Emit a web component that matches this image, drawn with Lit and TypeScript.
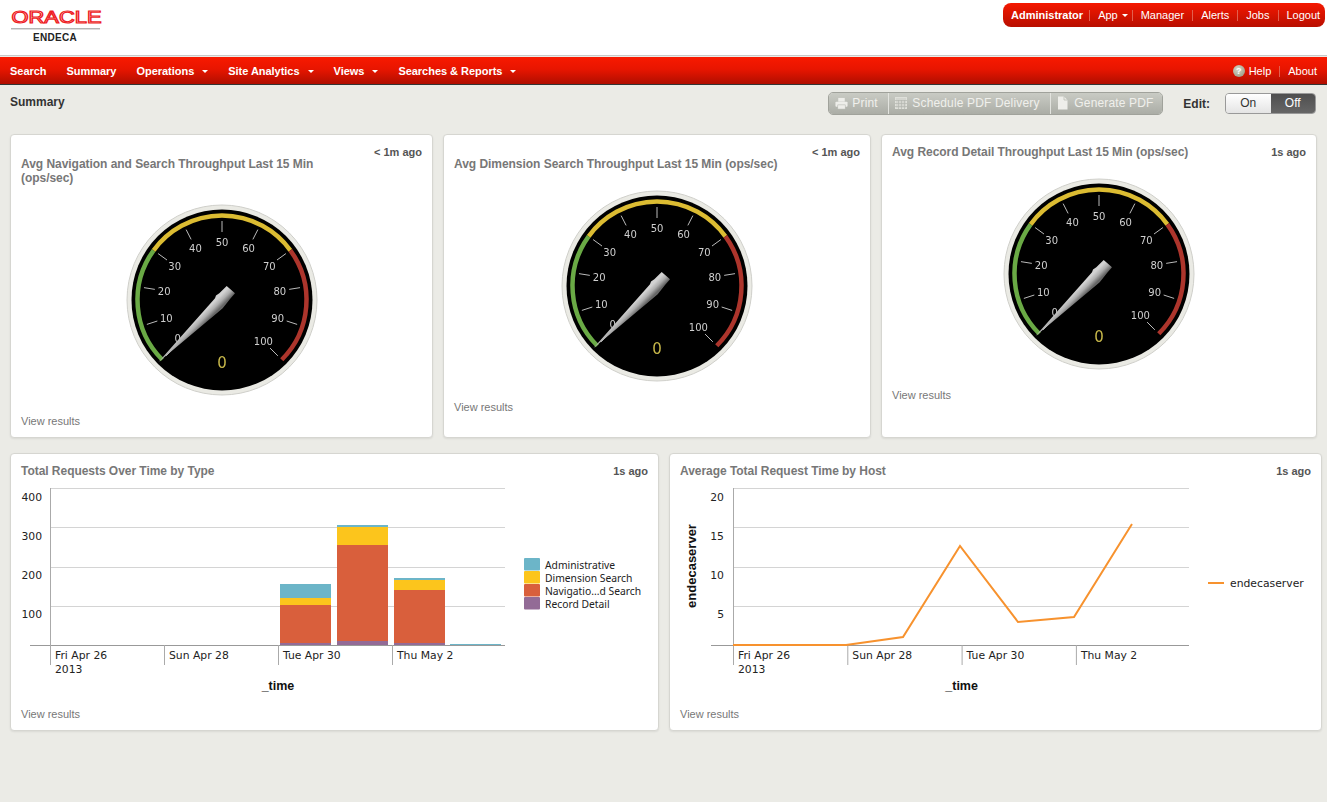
import { LitElement, html, svg, css } from 'lit';
import { customElement, property } from 'lit/decorators.js';

const polar = (r: number, value: number) => {
  const a = ((value / 100) * 270 - 225) * (Math.PI / 180);
  return [r * Math.cos(a), r * Math.sin(a)];
};

const arc = (r: number, from: number, to: number) => {
  const [x1, y1] = polar(r, from);
  const [x2, y2] = polar(r, to);
  return `M${x1} ${y1}A${r} ${r} 0 ${to - from > 66 ? 1 : 0} 1 ${x2} ${y2}`;
};

@customElement('gauge-dial')
export class GaugeDial extends LitElement {
  @property() gid = 'g';

  static styles = css`
    :host {
      display: block;
      width: 192px;
      height: 192px;
      margin: 19px auto 0;
    }
    svg {
      /* own layer, so the dial labels don't pick up coloured LCD fringes */
      will-change: transform;
    }
    text {
      font-family: 'DejaVu Sans', sans-serif;
    }
    .tick-label {
      font-size: 10px;
      fill: #cfcfcf;
    }
    .value {
      font-size: 15px;
      fill: #c8b84a;
    }
  `;

  render() {
    const ticks = [0, 10, 20, 30, 40, 50, 60, 70, 80, 90, 100];
    return html`<svg width="192" height="192" viewBox="-96 -96 192 192">
      <defs>
        <linearGradient id="${this.gid}-n" gradientUnits="userSpaceOnUse" x1="-5" y1="-1" x2="1" y2="5">
          <stop offset="0" stop-color="#d2d2d2" />
          <stop offset="0.5" stop-color="#adadad" />
          <stop offset="1" stop-color="#666" />
        </linearGradient>
      </defs>
      <circle r="95" fill="#eaeae4" stroke="#cfcfca" />
      <circle r="90.5" fill="#000" />
      <path d=${arc(84.5, 0, 30)} fill="none" stroke="#6aaa45" stroke-width="4.5" />
      <path d=${arc(84.5, 30, 70)} fill="none" stroke="#dcbc32" stroke-width="4.5" />
      <path d=${arc(84.5, 70, 100)} fill="none" stroke="#ad352c" stroke-width="4.5" />
      ${ticks.map((t) => {
        const [x1, y1] = polar(79, t);
        const [x2, y2] = polar(68, t);
        const [lx, ly] = polar(58.5, t);
        const nudge = t === 0 ? -3 : 0;
        return svg`<line x1=${x1} y1=${y1} x2=${x2} y2=${y2} stroke="#bbb" />
          <text class="tick-label" x=${lx + nudge} y=${ly + 4 + nudge} text-anchor="middle">${t}</text>`;
      })}
      <text class="value" x="0" y="68" text-anchor="middle">0</text>
      <polygon
        points="-63.7,62.3 -7,-1.7 -6,-4.5 -2.7,-6.7 4.7,-14 13,-6.7 8,-1 0.7,8.3"
        fill="url(#${this.gid}-n)"
      />
    </svg>`;
  }
}

const STACK_COLORS = ['#6cb5c8', '#fcc51c', '#d95f3c', '#936b96'];
const STACKS = [
  { x: 280, cuts: [584, 598, 605, 643, 645] },
  { x: 337, cuts: [525, 527, 545, 641, 645] },
  { x: 394, cuts: [578, 580, 590, 643, 645] },
  { x: 450, cuts: [644, 645] },
];
const GRID_Y = [488, 527, 567, 606];
const TIME_LABELS = ['Fri Apr 26', 'Sun Apr 28', 'Tue Apr 30', 'Thu May 2'];
const LINE_POINTS = '733,645 846,645 903,637 960,546 1018,622 1074,617 1132,524';

@customElement('time-chart')
export class TimeChart extends LitElement {
  @property() kind = 'bars';

  static styles = css`
    :host {
      display: block;
    }
    svg {
      display: block;
    }
    text {
      font-family: 'DejaVu Sans', sans-serif;
      font-size: 10.8px;
      fill: #222;
    }
    .legend {
      font-family: 'Noto Sans', sans-serif;
      font-size: 10.3px;
    }
    .axis-title {
      font-family: 'Liberation Sans', sans-serif;
      font-size: 12.5px;
      font-weight: 700;
      fill: #111;
    }
    .axis-title.side {
      font-size: 13px;
    }
    .grid {
      stroke: #d4d4d4;
    }
    .axis {
      stroke: #aaa;
    }
    .base {
      stroke: #999;
    }
  `;

  axes(x0: number, x1: number, baseFrom: number, step: number, labels: string[], labelEnd: number) {
    return svg`
      ${GRID_Y.map((y) => svg`<line class="grid" x1=${x0} x2=${x1} y1=${y + 0.5} y2=${y + 0.5} />`)}
      <line class="base" x1=${baseFrom} x2=${x1} y1="645.5" y2="645.5" />
      <line class="axis" x1=${x0 + 0.5} x2=${x0 + 0.5} y1="488" y2="665" />
      ${TIME_LABELS.map((label, i) => {
        const x = x0 + i * step;
        return svg`<line class="axis" x1=${x + 0.5} x2=${x + 0.5} y1="645" y2="665" />
          <text x=${x + 5} y="659">${label}</text>`;
      })}
      <text x=${x0 + 5} y="673">2013</text>
      <text class="axis-title" x=${x0 + step * 2} y="690" text-anchor="middle">_time</text>
      ${labels.map((l, i) => svg`<text x=${labelEnd} y=${501 + i * 39} text-anchor="end">${l}</text>`)}
    `;
  }

  bars() {
    const legend = ['Administrative', 'Dimension Search', 'Navigatio...d Search', 'Record Detail'];
    return html`<svg width="647" height="229" viewBox="11 478 647 229">
      ${this.axes(50, 505, 30, 114, ['400', '300', '200', '100'], 42)}
      ${STACKS.map((s) =>
        s.cuts.slice(1).map((c, i) => {
          const color = s.cuts.length === 2 ? STACK_COLORS[0] : STACK_COLORS[i];
          return svg`<rect x=${s.x} y=${s.cuts[i]} width="51" height=${c - s.cuts[i]} fill=${color} />`;
        })
      )}
      ${legend.map(
        (l, i) => svg`<rect x="524" y=${558 + i * 13} width="16" height="12.5" rx="1" fill=${STACK_COLORS[i]} />
          <text class="legend" x="545" y=${569 + i * 13}>${l}</text>`
      )}
    </svg>`;
  }

  line() {
    return html`<svg width="651" height="229" viewBox="670 478 651 229">
      ${this.axes(733, 1189, 711, 114.3, ['20', '15', '10', '5'], 724)}
      <polyline points=${LINE_POINTS} fill="none" stroke="#f7922e" stroke-width="2" />
      <text class="axis-title side" transform="translate(696 566) rotate(-90)" text-anchor="middle">endecaserver</text>
      <line x1="1208" x2="1224" y1="583" y2="583" stroke="#f7922e" stroke-width="2" />
      <text x="1230" y="587">endecaserver</text>
    </svg>`;
  }

  render() {
    return this.kind === 'bars' ? this.bars() : this.line();
  }
}

@customElement('app-root')
export class AppRoot extends LitElement {
  static styles = css`
    :host {
      display: block;
      min-height: 802px;
      background: #ebebe6;
      font-family: 'Liberation Sans', Arial, sans-serif;
      font-size: 11px;
      color: #333;
    }

    .top {
      height: 55px;
      background: #fff;
      border-bottom: 1px solid #c9c9c9;
      display: flex;
      justify-content: space-between;
      align-items: flex-start;
    }
    .logo {
      width: 92px;
      margin: 9px 0 0 11px;
    }
    .logo svg {
      display: block;
    }
    .oracle {
      font-family: 'Liberation Sans', sans-serif;
      font-size: 16px;
      fill: #fff;
      stroke: #ee1c25;
      stroke-width: 1.1px;
    }
    .rule {
      height: 1px;
      width: 89px;
      background: #b5b5b5;
      margin-top: 2px;
      border-bottom: 1px solid #ddd;
    }
    .endeca {
      width: 88px;
      text-align: center;
      font-weight: 700;
      font-size: 10px;
      letter-spacing: 0.3px;
      color: #222;
      margin-top: 2px;
    }
    .user-box {
      margin: 3px 2px 0 0;
      height: 24px;
      width: 322px;
      box-sizing: border-box;
      padding-left: 8px;
      display: flex;
      align-items: center;
      border-radius: 8px;
      background: linear-gradient(#f51800, #b80e00);
      color: #fff;
    }
    .user-box span {
      padding: 0 8px;
      line-height: 11px;
      border-left: 1px solid #e2604f;
      display: flex;
      align-items: center;
    }
    .user-box span:first-child {
      padding-left: 0;
      padding-right: 6px;
      border-left: 0;
      font-weight: 700;
    }

    .nav {
      margin-top: 1px;
      height: 27px;
      box-sizing: border-box;
      padding: 1px 10px 0;
      background: linear-gradient(#f81a00, #e81500 45%, #b00e00);
      color: #fff;
      display: flex;
      align-items: center;
      justify-content: space-between;
    }
    .nav-line {
      height: 1px;
      background: #333;
    }
    .nav-left,
    .nav-right {
      display: flex;
      align-items: center;
      line-height: 13px;
    }
    .nav-left {
      gap: 20px;
      font-weight: 700;
      letter-spacing: -0.03px;
    }
    .nav-left span {
      display: flex;
      align-items: center;
    }
    .caret {
      width: 0;
      height: 0;
      border: 3px solid transparent;
      border-top-color: #fff;
      border-bottom: 0;
      margin-left: 8px;
    }
    .user-box .caret {
      margin-left: 4px;
      margin-right: -4px;
    }
    .help {
      width: 12px;
      height: 12px;
      border-radius: 50%;
      background: radial-gradient(circle at 40% 35%, #d8d8c8, #8f8f78);
      color: #fff;
      font-size: 9px;
      font-weight: 700;
      line-height: 12px;
      text-align: center;
      margin-right: 4px;
    }
    .nav-right .about {
      border-left: 1px solid #e2604f;
      line-height: 11px;
      margin-left: 8px;
      padding-left: 8px;
    }

    .bar {
      height: 49px;
      box-sizing: border-box;
      padding: 7px 11px 0 10px;
      display: flex;
      align-items: flex-start;
    }
    .page-title {
      font-size: 12px;
      font-weight: 700;
      line-height: 20px;
      flex: 1;
    }
    .actions {
      display: flex;
      height: 23px;
      border-radius: 5px;
      overflow: hidden;
      border: 1px solid #a0a29b;
      box-sizing: border-box;
    }
    .actions div {
      display: flex;
      align-items: center;
      gap: 5px;
      padding: 0 6px 1px;
      box-sizing: border-box;
      font-size: 12px;
      letter-spacing: 0.15px;
      color: #f0f0ec;
      background: linear-gradient(#c9cbc4, #abada6);
      border-left: 1px solid #e3e4df;
    }
    .actions div:first-child {
      border-left: 0;
    }
    .actions .print {
      width: 59px;
      gap: 4px;
    }
    .actions .schedule {
      width: 162px;
    }
    .actions .generate {
      width: 112px;
      gap: 6px;
    }
    .edit {
      font-size: 12px;
      font-weight: 700;
      margin: 5px 15px 0 20px;
    }
    .toggle {
      display: flex;
      width: 91px;
      height: 21px;
      margin-top: 1px;
      border: 1px solid #999;
      border-radius: 4px;
      overflow: hidden;
      box-sizing: border-box;
      font-size: 12px;
      line-height: 19px;
      text-align: center;
    }
    .toggle div {
      flex: 1;
    }
    .on {
      background: linear-gradient(#fff, #e4e4e4);
    }
    .off {
      background: linear-gradient(#4f4f4f, #666);
      color: #fff;
    }

    .row {
      display: flex;
      gap: 10px;
      padding-left: 10px;
    }
    .row + .row {
      margin-top: 15px;
    }
    .card {
      background: #fff;
      border: 1px solid #d6d6d1;
      border-radius: 4px;
      box-shadow: 0 1px 2px rgba(0, 0, 0, 0.08);
      box-sizing: border-box;
    }
    .w423 { width: 423px; height: 304px; }
    .w428 { width: 428px; height: 304px; }
    .w436 { width: 436px; height: 304px; }
    .w649 { width: 649px; height: 278px; }
    .w653 { width: 653px; height: 278px; }
    .head {
      display: flex;
      justify-content: space-between;
      padding: 10px 10px 0;
      line-height: 14px;
    }
    .title {
      font-size: 12px;
      font-weight: 700;
      color: #777;
      letter-spacing: -0.04px;
    }
    .title.drop {
      margin-top: 12px;
    }
    .ago {
      font-weight: 700;
      color: #555;
      white-space: nowrap;
    }
    .view {
      margin: 18px 0 0 10px;
      line-height: 14px;
      color: #777;
    }
    time-chart + .view {
      margin-top: 0;
    }
  `;

  renderGauge(size: string, gid: string, title: unknown, ago: string, drop: boolean) {
    return html`<section class="card ${size}">
      <div class="head">
        <div class="title ${drop ? 'drop' : ''}">${title}</div>
        <div class="ago">${ago}</div>
      </div>
      <gauge-dial .gid=${gid}></gauge-dial>
      <div class="view">View results</div>
    </section>`;
  }

  renderChart(size: string, kind: string, title: string) {
    return html`<section class="card ${size}">
      <div class="head">
        <div class="title">${title}</div>
        <div class="ago">1s ago</div>
      </div>
      <time-chart .kind=${kind}></time-chart>
      <div class="view">View results</div>
    </section>`;
  }

  render() {
    return html`
      <header class="top">
        <div class="logo">
          <svg width="92" height="17" viewBox="0 0 92 17">
            <text class="oracle" x="0.5" y="14.2" textLength="90" lengthAdjust="spacingAndGlyphs">ORACLE</text>
          </svg>
          <div class="rule"></div>
          <div class="endeca">ENDECA</div>
        </div>
        <div class="user-box">
          <span>Administrator</span>
          <span>App<i class="caret"></i></span>
          <span>Manager</span>
          <span>Alerts</span>
          <span>Jobs</span>
          <span>Logout</span>
        </div>
      </header>
      <nav class="nav">
        <div class="nav-left">
          <span>Search</span>
          <span>Summary</span>
          <span>Operations<i class="caret"></i></span>
          <span>Site Analytics<i class="caret"></i></span>
          <span>Views<i class="caret"></i></span>
          <span>Searches &amp; Reports<i class="caret"></i></span>
        </div>
        <div class="nav-right">
          <div class="help">?</div>
          <span>Help</span>
          <span class="about">About</span>
        </div>
      </nav>
      <div class="nav-line"></div>
      <div class="bar">
        <div class="page-title">Summary</div>
        <div class="actions">
          <div class="print">
            <svg width="13" height="13" viewBox="0 0 14 13" fill="#eeeeea">
              <rect x="3.5" y="0.5" width="7" height="4" />
              <rect x="0.5" y="4.5" width="13" height="5.5" rx="1" />
              <rect x="3" y="8" width="8" height="4.5" stroke="#b5b7b0" stroke-width="0.6" />
            </svg>
            Print
          </div>
          <div class="schedule">
            <svg width="12" height="12" viewBox="0 0 12 12" fill="none" stroke="#dfe0da">
              <rect x="0.5" y="0.5" width="11" height="11" fill="#d4d5cf" />
              <path d="M0 3.5H12M0 6.5H12M0 9.5H12M3.5 3V12M6.5 3V12M9.5 3V12" stroke="#b5b7b0" stroke-width="0.7" />
            </svg>
            Schedule PDF Delivery
          </div>
          <div class="generate">
            <svg width="11" height="14" viewBox="0 0 11 14" fill="#eeeeea">
              <path d="M1 0.5H7L10.5 4V13.5H1Z" />
              <path d="M7 0.5V4H10.5" fill="none" stroke="#b5b7b0" stroke-width="0.7" />
            </svg>
            Generate PDF
          </div>
        </div>
        <div class="edit">Edit:</div>
        <div class="toggle">
          <div class="on">On</div>
          <div class="off">Off</div>
        </div>
      </div>
      <div class="row">
        ${this.renderGauge('w423', 'g1', html`Avg Navigation and Search Throughput Last 15 Min<br />(ops/sec)`, '< 1m ago', true)}
        ${this.renderGauge('w428', 'g2', 'Avg Dimension Search Throughput Last 15 Min (ops/sec)', '< 1m ago', true)}
        ${this.renderGauge('w436', 'g3', 'Avg Record Detail Throughput Last 15 Min (ops/sec)', '1s ago', false)}
      </div>
      <div class="row">
        ${this.renderChart('w649', 'bars', 'Total Requests Over Time by Type')}
        ${this.renderChart('w653', 'line', 'Average Total Request Time by Host')}
      </div>
    `;
  }
}
